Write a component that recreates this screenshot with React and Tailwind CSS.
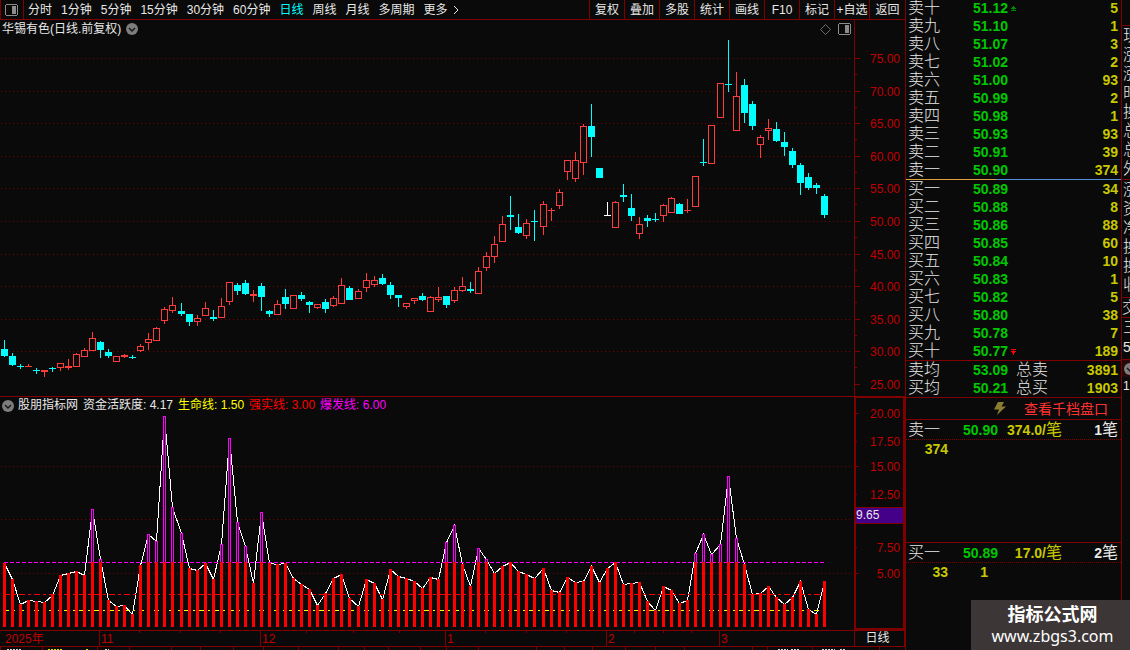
import React from "react";

// [x, high, low, bodyTop, bodyBottom, kind]: u = up, d = down, f = flat
const CANDLES = [
  [4, 340, 357, 349, 356, "d"], [12, 353, 366, 356, 365, "d"], [20, 364, 369, 366, 367, "d"], [28, 364, 367, 366, 367, "u"],
  [36, 368, 374, 370, 371, "d"], [44, 370, 377, 370, 372, "u"], [52, 367, 372, 368, 369, "d"], [60, 363, 371, 363, 368, "u"],
  [68, 359, 370, 366, 368, "u"], [76, 353, 367, 354, 367, "u"], [84, 348, 357, 350, 357, "u"], [92, 332, 351, 338, 351, "u"],
  [100, 341, 358, 342, 350, "d"], [108, 349, 358, 352, 356, "d"], [116, 356, 362, 356, 362, "u"], [124, 354, 358, 355, 357, "u"],
  [132, 355, 359, 357, 358, "d"], [140, 344, 352, 346, 351, "u"], [148, 333, 350, 339, 343, "u"], [156, 327, 341, 328, 341, "u"],
  [164, 307, 324, 309, 321, "u"], [172, 297, 313, 305, 311, "u"], [181, 303, 316, 311, 314, "d"], [189, 314, 326, 314, 322, "d"],
  [197, 315, 326, 318, 322, "u"], [205, 302, 316, 308, 316, "u"], [213, 310, 321, 317, 319, "d"], [221, 298, 318, 306, 318, "u"],
  [229, 282, 305, 282, 302, "u"], [237, 283, 295, 285, 291, "d"], [245, 280, 295, 283, 294, "d"], [253, 290, 302, 294, 296, "u"],
  [261, 283, 311, 286, 297, "d"], [269, 310, 317, 311, 314, "d"], [277, 300, 315, 304, 315, "u"], [285, 289, 309, 297, 304, "d"],
  [293, 295, 309, 295, 309, "u"], [301, 292, 301, 295, 299, "d"], [309, 301, 313, 302, 305, "d"], [317, 304, 309, 304, 308, "u"],
  [325, 299, 313, 302, 309, "d"], [333, 296, 307, 298, 306, "u"], [341, 278, 304, 285, 304, "u"], [349, 286, 300, 288, 300, "d"],
  [358, 289, 299, 291, 299, "u"], [366, 273, 292, 280, 288, "u"], [374, 276, 287, 280, 285, "u"], [382, 274, 285, 278, 284, "d"],
  [390, 282, 299, 285, 295, "d"], [398, 295, 307, 295, 298, "d"], [406, 303, 309, 303, 307, "u"], [414, 298, 304, 298, 301, "u"],
  [422, 293, 301, 296, 300, "d"], [430, 296, 312, 297, 312, "u"], [438, 287, 302, 297, 300, "u"], [446, 296, 308, 296, 305, "d"],
  [454, 287, 303, 290, 301, "u"], [462, 277, 292, 286, 291, "u"], [470, 282, 293, 289, 291, "d"], [478, 267, 294, 271, 294, "u"],
  [486, 252, 271, 256, 268, "u"], [494, 236, 263, 244, 257, "u"], [502, 216, 242, 224, 242, "u"], [510, 196, 230, 215, 217, "d"],
  [518, 214, 234, 227, 233, "d"], [526, 219, 239, 223, 236, "u"], [534, 210, 241, 221, 222, "d"], [543, 201, 235, 204, 227, "u"],
  [551, 208, 221, 210, 211, "u"], [559, 189, 209, 192, 206, "u"], [567, 160, 180, 160, 172, "u"], [575, 152, 182, 160, 179, "u"],
  [583, 124, 175, 126, 163, "u"], [591, 104, 157, 126, 137, "d"], [599, 168, 178, 168, 178, "d"], [607, 202, 216, 215, 216, "f"],
  [615, 201, 228, 202, 228, "u"], [623, 184, 202, 195, 197, "d"], [631, 194, 221, 208, 216, "d"], [639, 217, 239, 224, 234, "u"],
  [647, 215, 227, 218, 221, "d"], [655, 213, 222, 219, 220, "d"], [663, 204, 222, 205, 216, "u"], [671, 197, 213, 198, 213, "u"],
  [679, 203, 214, 204, 214, "d"], [687, 199, 213, 210, 211, "u"], [695, 176, 207, 176, 207, "u"], [703, 139, 166, 162, 163, "d"],
  [711, 125, 164, 125, 164, "u"], [720, 83, 118, 83, 118, "u"], [728, 40, 92, 84, 85, "d"], [736, 72, 131, 96, 131, "u"],
  [744, 79, 123, 85, 113, "d"], [752, 101, 130, 104, 126, "d"], [760, 135, 158, 137, 145, "u"], [768, 119, 140, 128, 131, "u"],
  [776, 122, 142, 129, 141, "d"], [784, 132, 156, 142, 147, "d"], [792, 148, 168, 151, 165, "d"], [800, 163, 195, 165, 183, "d"],
  [808, 173, 190, 177, 188, "d"], [816, 183, 194, 185, 188, "d"], [824, 194, 218, 196, 215, "d"],
];

const ACTIVITY = [
  563, 579, 604, 600, 601, 602, 595, 575, 573, 571, 575, 509, 559, 600, 606, 605, 614, 565, 534, 541, 416, 507, 533, 568, 570, 563,
  579, 544, 438, 522, 546, 583, 512, 563, 564, 563, 578, 584, 589, 605, 593, 578, 574, 598, 606, 579, 583, 599, 569, 576, 578, 581,
  588, 577, 579, 542, 525, 564, 586, 548, 559, 573, 566, 562, 571, 574, 578, 568, 590, 592, 577, 582, 581, 566, 582, 568, 562, 584,
  583, 582, 601, 610, 586, 590, 603, 600, 553, 534, 554, 544, 476, 538, 564, 594, 593, 586, 597, 604, 597, 581, 609, 614, 581,
];

const PRICE_TICKS = [
  [58, "75.00"], [91, "70.00"], [123, "65.00"], [156, "60.00"], [188, "55.00"], [221, "50.00"],
  [254, "45.00"], [286, "40.00"], [319, "35.00"], [351, "30.00"], [384, "25.00"],
];
const ACTIVITY_TICKS = [
  [413, "20.00", true], [441, "17.50"], [466, "15.00", true], [494, "12.50"], [547, "7.50"], [573, "5.00", true],
];

const PERIODS = ["分时", "1分钟", "5分钟", "15分钟", "30分钟", "60分钟", "日线", "周线", "月线", "多周期", "更多"];
const TOOLS = ["复权", "叠加", "多股", "统计", "画线", "F10", "标记", "+自选"];

const SELLS = [
  ["卖十", "51.12", "5"], ["卖九", "51.10", "1"], ["卖八", "51.07", "3"], ["卖七", "51.02", "2"], ["卖六", "51.00", "93"],
  ["卖五", "50.99", "2"], ["卖四", "50.98", "1"], ["卖三", "50.93", "93"], ["卖二", "50.91", "39"], ["卖一", "50.90", "374"],
];
const BUYS = [
  ["买一", "50.89", "34"], ["买二", "50.88", "8"], ["买三", "50.86", "88"], ["买四", "50.85", "60"], ["买五", "50.84", "10"],
  ["买六", "50.83", "1"], ["买七", "50.82", "5"], ["买八", "50.80", "38"], ["买九", "50.78", "7"], ["买十", "50.77", "189"],
];

function PanelIcon() {
  return (
    <svg width="13" height="12" viewBox="0 0 13 12" shapeRendering="crispEdges" aria-hidden="true">
      <rect x="1" y="0" width="11" height="1" fill="#8c8c8c" />
      <rect x="1" y="11" width="11" height="1" fill="#8c8c8c" />
      <rect x="0" y="1" width="1" height="10" fill="#8c8c8c" />
      <rect x="12" y="1" width="1" height="10" fill="#8c8c8c" />
      <rect x="7" y="2" width="4" height="8" fill="#8c8c8c" />
    </svg>
  );
}

function ChevronBadge() {
  return (
    <svg width="12" height="12" viewBox="0 0 12 12" aria-hidden="true">
      <circle cx="6" cy="6" r="6" fill="#7d7d7d" />
      <path d="M3 5 L6 8 L9 5" fill="none" stroke="#181818" strokeWidth="1.5" />
    </svg>
  );
}

function Dotted({ y }) {
  return <line x1="1" x2="99.5%" y1={y + 0.5} y2={y + 0.5} stroke="#780000" strokeDasharray="1 3" />;
}

function Toolbar() {
  return (
    <header className="flex h-5 items-stretch border-b border-[#800000] text-xs leading-[18px]">
      <button aria-label="侧栏" className="flex w-6 items-center border-x border-[#800000] pl-1">
        <PanelIcon />
      </button>
      <nav className="flex flex-1 items-center gap-[9px] pl-1">
        {PERIODS.map((p) => (
          <button key={p} className={p === "日线" ? "whitespace-nowrap text-[#00ffff]" : "whitespace-nowrap"}>
            {p}
          </button>
        ))}
        <svg width="6" height="10" viewBox="0 0 6 10" className="-ml-1" aria-hidden="true">
          <path d="M1 1 L5 5 L1 9" fill="none" stroke="#e4e4e4" />
        </svg>
      </nav>
      <div className="flex">
        {TOOLS.map((t) => (
          <button key={t} className="w-[35px] whitespace-nowrap border-l border-[#800000] text-center">
            {t}
          </button>
        ))}
        <button className="w-9 border-l border-[#800000] text-center">返回</button>
      </div>
    </header>
  );
}

function Candle({ c }) {
  const [x, hi, lo, top, bot, kind] = c;
  const color = kind === "u" ? "#ff3c3c" : kind === "d" ? "#00ffff" : "#ffffff";
  const hollow = kind === "u" && bot - top > 2;
  return (
    <g fill={color}>
      {hi < top && <rect x={x} y={hi} width="1" height={top - hi} />}
      {lo > bot && <rect x={x} y={bot} width="1" height={lo - bot} />}
      {hollow ? (
        <rect x={x - 2.5} y={top + 0.5} width="6" height={bot - top - 1} fill="#0a0a0a" stroke={color} />
      ) : (
        <rect x={x - 3} y={top} width="7" height={bot - top} />
      )}
    </g>
  );
}

function PriceChart() {
  return (
    <section className="flex h-[376px]">
      <div className="flex min-w-0 flex-1 flex-col overflow-hidden">
        <div className="flex h-[18px] items-center gap-[5px] pl-[2px] pr-[3px] text-xs leading-[18px]">
          <h1>华锡有色(日线.前复权)</h1>
          <ChevronBadge />
          <svg width="11" height="11" viewBox="0 0 11 11" className="ml-auto mr-[2px]" aria-hidden="true">
            <path d="M5.5 0.5 L10.5 5.5 L5.5 10.5 L0.5 5.5 Z" fill="none" stroke="#828282" strokeWidth="0.8" />
          </svg>
          <PanelIcon />
        </div>
        <svg className="w-full flex-1" shapeRendering="crispEdges" role="img" aria-label="日线K线图">
          <g transform="translate(0 -38)">
            {PRICE_TICKS.slice(0, 10).map(([y]) => <Dotted key={y} y={y} />)}
            {CANDLES.map((c) => <Candle key={c[0]} c={c} />)}
          </g>
        </svg>
      </div>
      <svg className="h-full w-[51px] border-l border-[#800000]" aria-label="价格坐标">
        <g transform="translate(0 -20)">
          {PRICE_TICKS.map(([y, label]) => (
            <g key={label}>
              <rect x="0" y={y} width="5" height="1" fill="#800000" />
              <rect x="0" y={y + 16} width="2" height="1" fill="#800000" />
              <text x="45" y={y + 5} textAnchor="end" fontSize="12" fill="#c00000">{label}</text>
            </g>
          ))}
        </g>
      </svg>
    </section>
  );
}

function ActivityChart() {
  const points = ACTIVITY.map((y, i) => `${CANDLES[i][0] + 0.5},${y + 0.5}`).join(" ");
  return (
    <section className="flex h-[234px]">
      <div className="flex min-w-0 flex-1 flex-col overflow-hidden border-t border-[#800000]">
        <div className="flex h-[17px] items-center gap-[5px] whitespace-nowrap pl-[2px] text-xs leading-[17px]">
          <ChevronBadge />
          <span className="-ml-px">股朋指标网</span>
          <span>资金活跃度: 4.17</span>
          <span className="text-[#ffff00]">生命线: 1.50</span>
          <span className="text-[#ff0000]">强实线: 3.00</span>
          <span className="text-[#ff00ff]">爆发线: 6.00</span>
        </div>
        <svg className="w-full flex-1" shapeRendering="crispEdges" role="img" aria-label="资金活跃度">
          <g transform="translate(0 -414)">
            <Dotted y={466} />
            <Dotted y={519} />
            <Dotted y={573} />
            <g fill="none">
              <polyline points={points} stroke="#ffffff" />
              <line x1="4" x2="824" y1="562.5" y2="562.5" stroke="#ff00ff" strokeDasharray="4 2" />
              <line x1="4" x2="824" y1="594.5" y2="594.5" stroke="#ff0000" strokeDasharray="6 3 3 3" />
              <line x1="4" x2="824" y1="610.5" y2="610.5" stroke="#ffff00" strokeDasharray="5 4 2 4" />
            </g>
            {ACTIVITY.map((y, i) => {
              const x = CANDLES[i][0];
              const top = Math.max(y, 562);
              return (
                <g key={x}>
                  {y < 562 && <rect x={x - 0.5} y={y + 0.5} width="2" height={562 - y} fill="#0a0a0a" stroke="#ff00ff" />}
                  <rect x={x - 1} y={top} width="3" height={627 - top} fill="#ff0000" />
                </g>
              );
            })}
          </g>
        </svg>
      </div>
      <svg className="h-full w-[51px] border-2 border-[#800000]" aria-label="活跃度坐标">
        <g transform="translate(0 -398)">
          {ACTIVITY_TICKS.map(([y, label, major]) => (
            <g key={label}>
              <rect x="0" y={y} width={major ? 3 : 1} height="1" fill="#800000" />
              <text x="44" y={y + 5} textAnchor="end" fontSize="12" fill="#c00000">{label}</text>
            </g>
          ))}
          <rect x="0" y="507" width="50" height="17" fill="#800000" />
          <rect x="0" y="508" width="50" height="15" fill="#440088" />
          <text x="0" y="519" fontSize="12" fill="#e8e8e8">9.65</text>
        </g>
      </svg>
    </section>
  );
}

const MONTHS = [[99, "11"], [260, "12"], [445, "1"], [606, "2"], [719, "3"]];
const WEEKS = [139, 180, 220, 306, 353, 399, 485, 526, 566, 634, 663, 691];

function TimeAxis() {
  return (
    <div className="flex h-4 border-t border-[#800000] text-xs leading-[15px]">
      <svg className="h-full min-w-0 flex-1" aria-label="时间坐标">
        <text x="5" y="12" fontSize="12" fill="#c00000">2025年</text>
        {MONTHS.map(([x, m]) => (
          <g key={m}>
            <rect x={x} y="0" width="1" height="15" fill="#800000" />
            <text x={x + 2} y="12" fontSize="12" fill="#c00000">{m}</text>
          </g>
        ))}
        {WEEKS.map((x) => <rect key={x} x={x} y="0" width="1" height="2" fill="#800000" />)}
      </svg>
      <button className="w-[51px] border-x border-[#800000] pr-1 text-center">日线</button>
    </div>
  );
}

const TAB_EDGES = [0, 42, 97, 129, 171, 200, 233, 263, 298, 338, 364, 388, 420, 446, 478, 536, 564, 592, 625, 655, 684, 752, 767, 812, 879];

function TabStrip() {
  return (
    <svg className="block h-1 w-full border-t border-[#800000]" shapeRendering="crispEdges" aria-hidden="true">
      {TAB_EDGES.map((x) => <rect key={x} x={x} y="0" width="1" height="3" fill="#800000" />)}
      <g strokeWidth="1" fill="none">
        <path d="M7 2.5H21 M105 2.5H109 M778 2.5H788 M791 2.5H800 M822 2.5H835 M840 2.5H846" stroke="#d8d8d8" strokeDasharray="2 1" />
        <path d="M48 2.5H62 M86 2.5H88" stroke="#e0e000" strokeDasharray="2 1" />
      </g>
    </svg>
  );
}

function Marker({ up }) {
  return (
    <svg width="5" height="6" viewBox="0 0 5 6" shapeRendering="crispEdges" className="inline-block align-middle" aria-hidden="true">
      {up ? (
        <path d="M2 0h1v1h1v1h1v1H3v1h2v1H0V4h2V3H0V2h1V1h1z" fill="#008c00" />
      ) : (
        <path d="M0 0h5v1H3v1h2v1H4v1H3v2H2V4H1V3H0V2h2V1H0z" fill="#ff0000" />
      )}
    </svg>
  );
}

function QuoteTable({ rows, label, marked, up }) {
  return (
    <table aria-label={label} className="w-full shrink-0 table-fixed border-collapse">
      <tbody>
        {rows.map(([name, price, qty]) => (
          <tr key={name} className="h-[18px]">
            <th scope="row" className="w-[67px] pl-[2px] text-left text-base leading-[18px] font-light">{name}</th>
            <td className="w-[38px] text-sm leading-[18px] font-bold text-[#00c800]">{price}</td>
            <td className="w-4 leading-[14px]">{marked === name && <Marker up={up} />}</td>
            <td className="pr-[3px] text-right text-sm leading-[18px] font-bold text-[#c8c800]">{qty}</td>
          </tr>
        ))}
      </tbody>
    </table>
  );
}

function QueueRow({ name, price, avg, count }) {
  return (
    <div className="flex h-5 items-center border-b border-dotted border-[#800000] pl-[2px] pr-[3px] text-base leading-5">
      <span className="w-[55px] font-light">{name}</span>
      <span className="w-[43px] text-sm font-bold text-[#00c800]">{price}</span>
      <span className="w-[56px] whitespace-nowrap text-right text-[#c8c800]">
        <b className="text-sm">{avg}/</b>笔
      </span>
      <span className="ml-auto whitespace-nowrap"><b className="text-sm">{count}</b>笔</span>
    </div>
  );
}

function OrderPanel() {
  return (
    <aside className="flex w-[216px] shrink-0 flex-col border-l border-[#800000]">
      <div className="flex h-[179px] flex-col justify-end overflow-hidden">
        <QuoteTable rows={SELLS} label="卖盘" marked="卖十" up />
      </div>
      <div className="flex h-px">
        <div className="w-[90px] bg-[#e0a040]" />
        <div className="flex-1 bg-[#5090d8]" />
      </div>
      <QuoteTable rows={BUYS} label="买盘" marked="买十" />
      <table aria-label="均价" className="w-full table-fixed border-y border-[#800000]">
        <tbody>
          {[["卖均", "53.09", "总卖", "3891"], ["买均", "50.21", "总买", "1903"]].map(([a, b, c, d]) => (
            <tr key={a} className="h-[18px]">
              <th scope="row" className="w-[67px] pl-[2px] text-left text-base leading-[18px] font-light">{a}</th>
              <td className="w-[43px] text-sm leading-[18px] font-bold text-[#00c800]">{b}</td>
              <th scope="row" className="w-9 text-left text-base leading-[18px] font-light">{c}</th>
              <td className="pr-[3px] text-right text-sm leading-[18px] font-bold text-[#c8c800]">{d}</td>
            </tr>
          ))}
        </tbody>
      </table>
      <div className="flex h-[22px] items-center justify-end gap-[18px] border-b border-[#800000] pr-[13px]">
        <svg width="12" height="13" viewBox="0 0 12 13" aria-hidden="true">
          <path d="M4 0 H10 L7.5 4.5 H12 L3 13 L5 7.5 H0 Z" fill="#8c7c30" />
        </svg>
        <a href="#depth" className="text-sm leading-5 text-[#ff3232]">查看千档盘口</a>
      </div>
      <section className="h-[122px]">
        <QueueRow name="卖一" price="50.90" avg="374.0" count="1" />
        <p className="w-[42px] text-right text-sm leading-[18px] font-bold text-[#c8c800]">374</p>
      </section>
      <section className="flex-1 border-t border-[#800000]">
        <QueueRow name="买一" price="50.89" avg="17.0" count="2" />
        <p className="flex text-right text-sm leading-[18px] font-bold text-[#c8c800]">
          <span className="w-[42px]">33</span>
          <span className="w-10">1</span>
        </p>
      </section>
    </aside>
  );
}

function InfoStrip() {
  return (
    <aside className="flex w-[9px] shrink-0 flex-col overflow-hidden border-l border-[#800000] text-base leading-[19px] font-light">
      <div className="h-[26px] shrink-0 border-b border-[#800000]" />
      <div className="h-[154px] shrink-0 border-b border-[#800000] pl-px">
        {["现", "涨", "涨", "时", "换", "总", "总", "外"].map((t, i) => <div key={i} className="w-4">{t}</div>)}
      </div>
      <div className="h-[118px] shrink-0 border-b border-[#800000] pl-px">
        {["涨", "资", "净", "换", "换", "收"].map((t, i) => <div key={i} className="w-4">{t}</div>)}
      </div>
      <div className="h-5 shrink-0 border-b border-[#800000]"><div className="w-4">交</div></div>
      <div className="h-[42px] shrink-0 border-b border-[#800000] pl-px">
        <div className="w-4">三</div>
        <b className="text-sm">5</b>
      </div>
      <div className="flex h-[17px] shrink-0 items-center bg-[#2a0808] pl-[2px]">
        <div className="w-3 shrink-0"><ChevronBadge /></div>
      </div>
      <div className="pl-px text-xs leading-[18px]">1</div>
    </aside>
  );
}

export default function App() {
  return (
    <div className="relative flex min-h-screen overflow-hidden bg-[#0a0a0a] font-['Liberation_Sans','Noto_Sans_CJK_SC',sans-serif] text-[#e8e8e8]">
      <main className="flex min-w-0 flex-1 flex-col">
        <Toolbar />
        <PriceChart />
        <ActivityChart />
        <TimeAxis />
        <TabStrip />
      </main>
      <OrderPanel />
      <InfoStrip />
      <div className="absolute right-0 bottom-0 flex h-[50px] w-[159px] flex-col items-center bg-[#3d3637] pt-1 pl-1 text-white">
        <strong className="text-lg leading-[22px]">指标公式网</strong>
        <span className="font-['Noto_Sans',sans-serif] text-base leading-5">www.zbgs3.com</span>
      </div>
    </div>
  );
}
